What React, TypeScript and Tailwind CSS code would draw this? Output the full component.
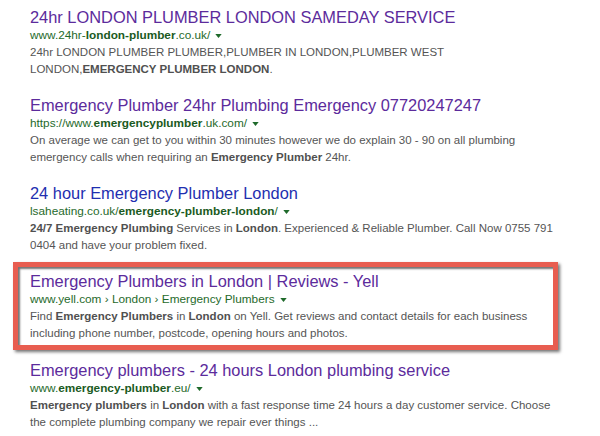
const results = [
  {
    title: "24hr LONDON PLUMBER LONDON SAMEDAY SERVICE",
    visited: true,
    url: (
      <>
        www.24hr-<b>london-plumber</b>.co.uk/
      </>
    ),
    snippet: (
      <>
        24hr LONDON PLUMBER PLUMBER,PLUMBER IN LONDON,PLUMBER WEST
        <br />
        LONDON,<b>EMERGENCY PLUMBER LONDON</b>.
      </>
    ),
  },
  {
    title: "Emergency Plumber 24hr Plumbing Emergency 07720247247",
    visited: true,
    url: (
      <>
        https://www.<b>emergencyplumber</b>.uk.com/
      </>
    ),
    snippet: (
      <>
        On average we can get to you within 30 minutes however we do explain 30 - 90 on all plumbing
        <br />
        emergency calls when requiring an <b>Emergency Plumber</b> 24hr.
      </>
    ),
  },
  {
    title: "24 hour Emergency Plumber London",
    visited: false,
    url: (
      <>
        lsaheating.co.uk/<b>emergency-plumber-london</b>/
      </>
    ),
    snippet: (
      <>
        <b>24/7 Emergency Plumbing</b> Services in <b>London</b>. Experienced &amp; Reliable Plumber. Call Now 0755 791
        <br />
        0404 and have your problem fixed.
      </>
    ),
  },
  {
    title: "Emergency Plumbers in London | Reviews - Yell",
    visited: true,
    highlight: true,
    url: <>www.yell.com › London › Emergency Plumbers</>,
    snippet: (
      <>
        Find <b>Emergency Plumbers</b> in <b>London</b> on Yell. Get reviews and contact details for each business
        <br />
        including phone number, postcode, opening hours and photos.
      </>
    ),
  },
  {
    title: "Emergency plumbers - 24 hours London plumbing service",
    visited: true,
    url: (
      <>
        www.<b>emergency-plumber</b>.eu/
      </>
    ),
    snippet: (
      <>
        <b>Emergency plumbers</b> in <b>London</b> with a fast response time 24 hours a day customer service. Choose
        <br />
        the complete plumbing company we repair ever things ...
      </>
    ),
  },
];

const Result = ({ r }: { r: (typeof results)[number] }) => (
  <div className="flex flex-col">
    <a
      href="#"
      className={`text-[16.4px] leading-[20px] whitespace-nowrap ${r.visited ? "text-[#5c2b9c]" : "text-[#1f2fb0]"}`}
    >
      {r.title}
    </a>
    <div className="flex items-center gap-[5px] text-[11.8px] leading-[17px] text-[#1f6a2b] [&_b]:font-bold [&_b]:text-[#1a5a22]">
      <span className="whitespace-nowrap">{r.url}</span>
      <svg width="7" height="4" viewBox="0 0 8 5" className="mt-[1px]">
        <path d="M0 0h8L4 5z" fill="#1f6a2b" />
      </svg>
    </div>
    <p className="text-[11.5px] leading-[17px] text-[#555] whitespace-nowrap [&_b]:font-bold [&_b]:text-[#505050]">
      {r.snippet}
    </p>
  </div>
);

export default function App() {
  return (
    <div className="w-[600px] h-[436px] bg-white overflow-hidden font-['Liberation_Sans',Arial,sans-serif] pt-[7px]">
      <div className="flex flex-col gap-[17px]">
        {results.map((r, i) =>
          r.highlight ? (
            <div
              key={i}
              className="ml-[13px] w-[545px] -mt-[9px] -mb-[7px] border-[5px] border-[#e85d50] bg-white pl-[12px] pt-[4px] pb-[3px] shadow-[2px_2px_3px_rgba(0,0,0,0.55),inset_2px_2px_2px_rgba(0,0,0,0.55)]"
            >
              <Result r={r} />
            </div>
          ) : (
            <div key={i} className="pl-[30px]">
              <Result r={r} />
            </div>
          )
        )}
      </div>
    </div>
  );
}
